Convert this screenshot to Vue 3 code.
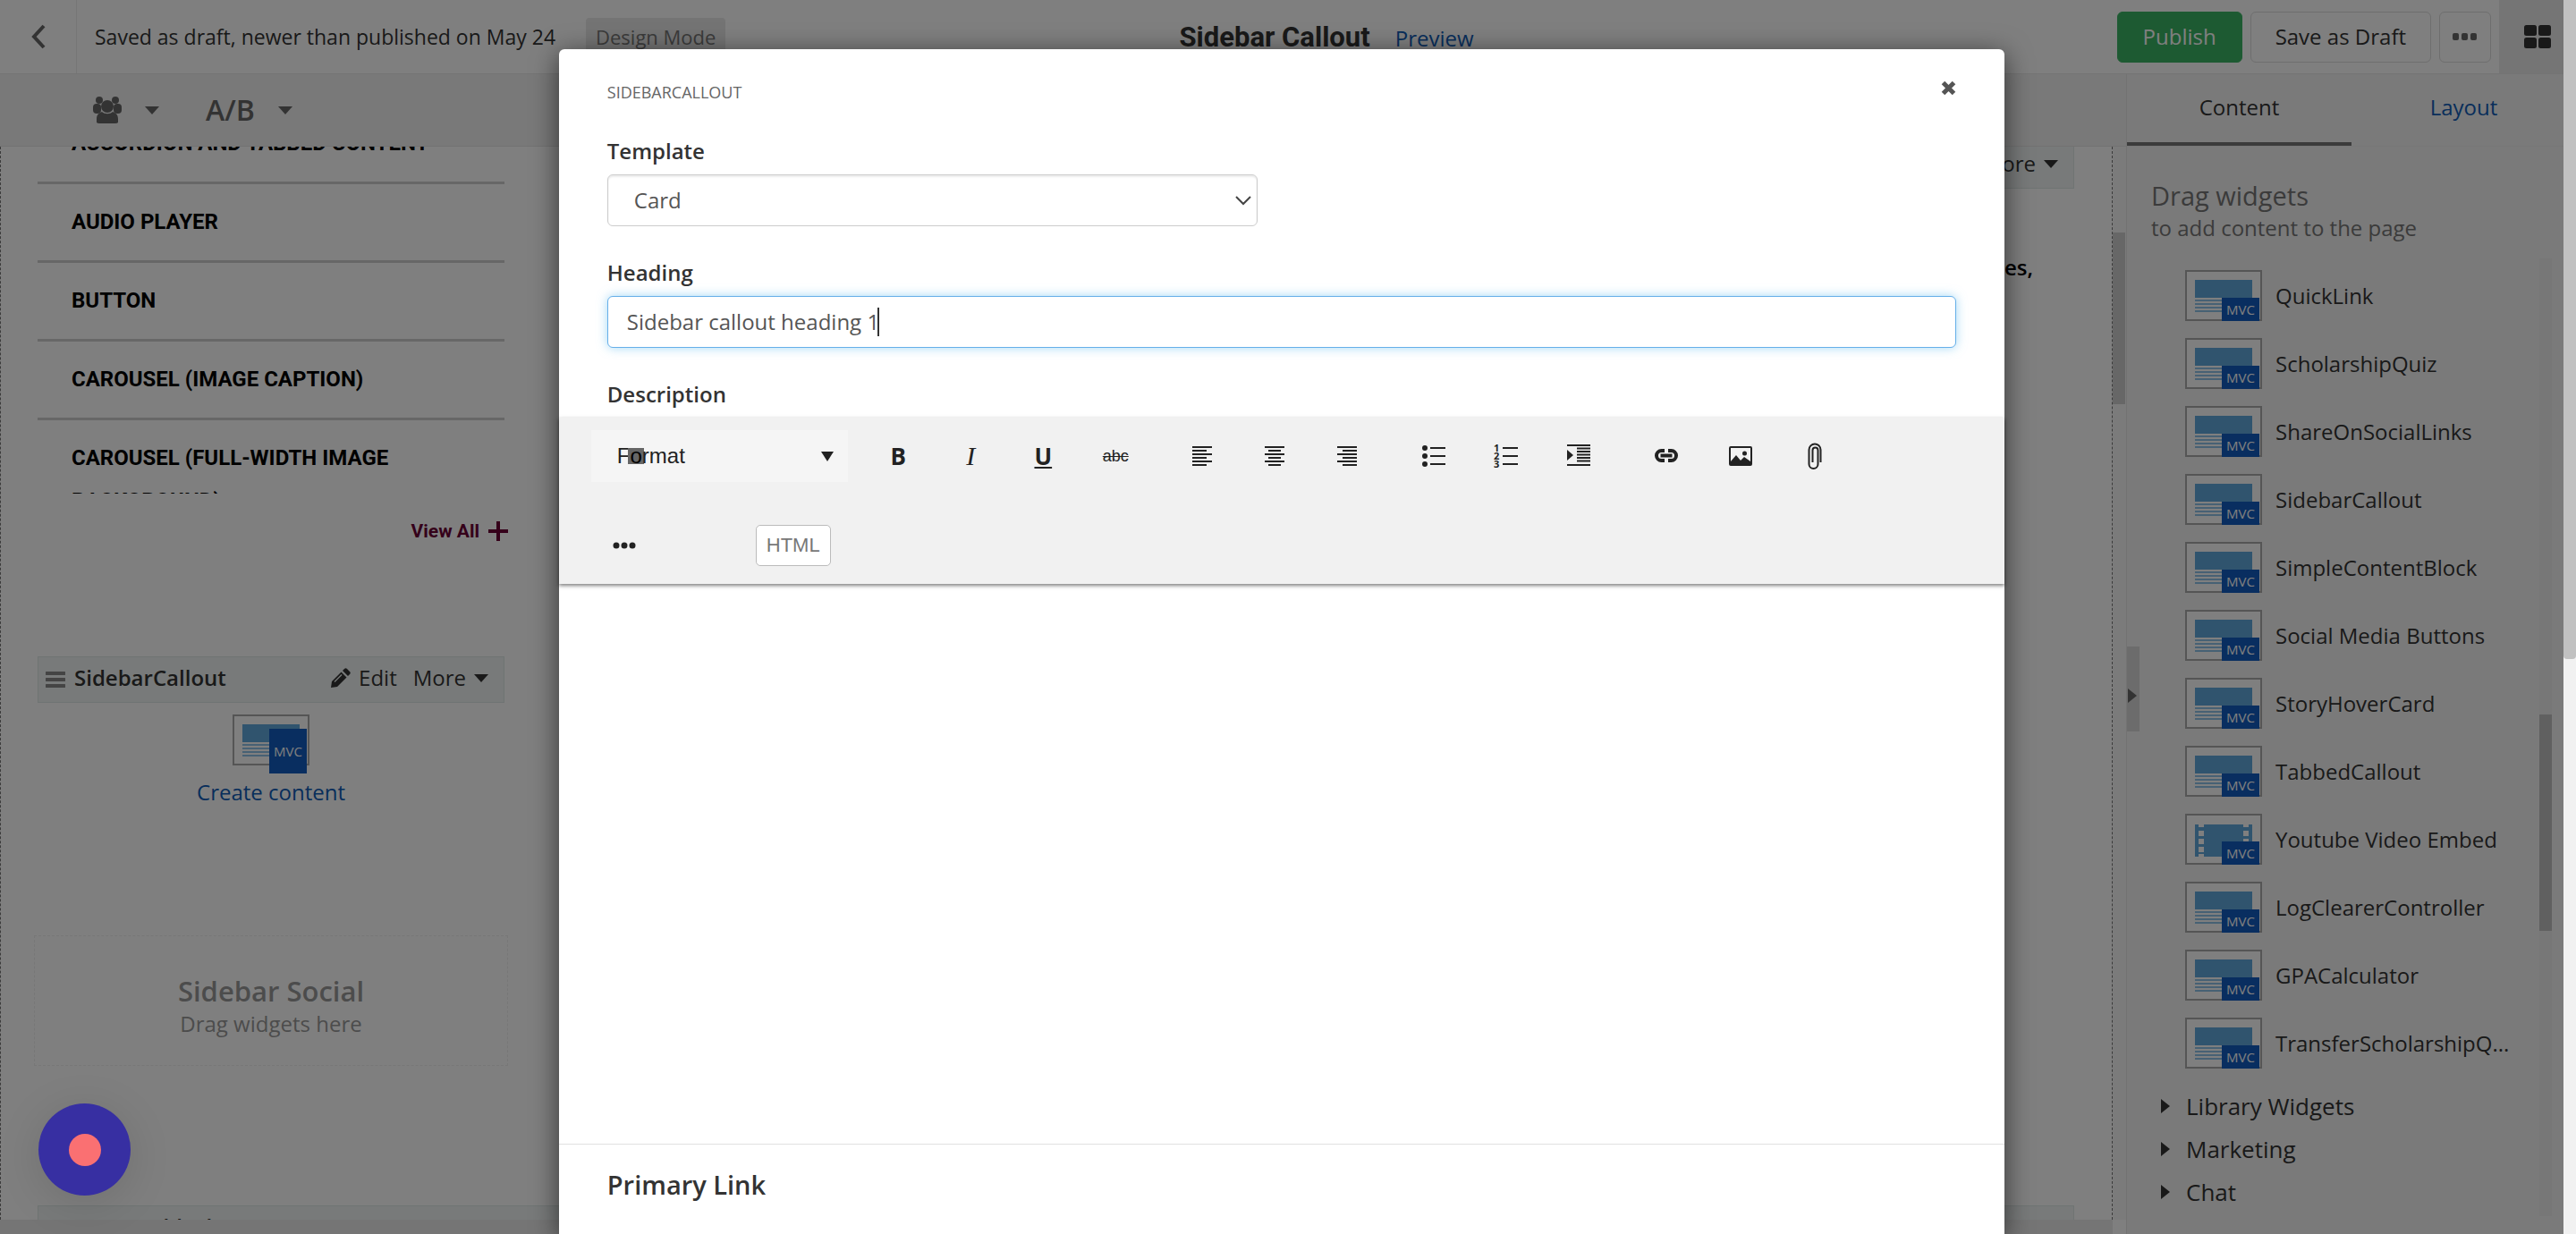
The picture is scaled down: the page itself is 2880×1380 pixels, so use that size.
<template>
  <div class="screen">
    <header class="topbar">
      <button class="back" title="Back">
        <svg width="18" height="28" viewBox="0 0 18 28">
          <path d="M15 2L4 14l11 12" fill="none" stroke="currentColor" stroke-width="4" />
        </svg>
      </button>
      <div class="topbar-side">
        <span class="status">Saved as draft, newer than published on May 24</span>
        <span class="mode">Design Mode</span>
      </div>
      <div class="topbar-title">
        <h1>Sidebar Callout</h1>
        <a href="#">Preview</a>
      </div>
      <div class="topbar-side topbar-actions">
        <button class="btn publish">Publish</button>
        <button class="btn">Save as Draft</button>
        <button class="btn dots" title="More actions">
          <svg width="28" height="8" viewBox="0 0 28 8">
            <rect v-for="x in [0, 10, 20]" :key="x" :x="x" width="7" height="8" rx="2" fill="currentColor" />
          </svg>
        </button>
        <button class="grid-btn" title="Widgets">
          <svg width="30" height="26" viewBox="0 0 30 26" fill="currentColor">
            <rect width="14" height="12" rx="2.5" />
            <rect x="16" width="14" height="12" rx="2.5" />
            <rect y="14" width="14" height="12" rx="2.5" />
            <rect x="16" y="14" width="14" height="12" rx="2.5" />
          </svg>
        </button>
      </div>
    </header>

    <div class="workspace">
      <main class="editor">
        <div class="personalize">
          <button class="tool" title="Audience">
            <svg width="32" height="30" viewBox="0 0 32 30" fill="currentColor">
              <circle cx="7" cy="4" r="4" />
              <circle cx="25" cy="4" r="4" />
              <rect x="0" y="8" width="9" height="11" rx="4" />
              <rect x="23" y="8" width="9" height="11" rx="4" />
              <circle cx="16" cy="11" r="7" />
              <path d="M4 29v-4c0-5 3-7 6-8 3 3 9 3 12 0 3 1 6 3 6 8v4q-1 1-3 1H7q-2 0-3-1z" />
            </svg>
            <i class="caret"></i>
          </button>
          <button class="tool">A/B <i class="caret"></i></button>
        </div>

        <div class="canvas">
          <div class="page">
            <div class="columns">
              <aside class="left-col">
                <ul class="links">
                  <li v-for="item in links" :key="item">{{ item }}</li>
                </ul>
                <a href="#" class="view-all">
                  View All
                  <svg width="22" height="22" viewBox="0 0 22 22">
                    <path d="M11 0v22M0 11h22" stroke="currentColor" stroke-width="4" />
                  </svg>
                </a>

                <div class="widget-bar">
                  <svg class="grip" width="22" height="18" viewBox="0 0 22 18">
                    <path d="M1 2h20M1 9h20M1 16h20" stroke="#888" stroke-width="4" stroke-linecap="round" />
                  </svg>
                  <strong>SidebarCallout</strong>
                  <button>
                    <svg width="22" height="22" viewBox="0 0 22 22" fill="currentColor">
                      <path d="M15 1q1.500-1.500 3 0l3 3q1.500 1.500 0 3l-2 2-6-6zM11.500 4.500l6 6L7 21l-7 1 1-7z" />
                      <path d="M4 15.500l8-8" stroke="#f0f5f4" stroke-width="1.200" />
                    </svg>
                    Edit
                  </button>
                  <button>More <i class="caret"></i></button>
                </div>
                <div class="empty-widget">
                  <div class="thumb large">
                    <span class="art text"></span>
                    <span class="mvc">MVC</span>
                  </div>
                  <a href="#">Create content</a>
                </div>

                <div class="dropzone">
                  <h3>Sidebar Social</h3>
                  <p>Drag widgets here</p>
                </div>
              </aside>

              <section class="main-col">
                <div class="widget-bar">
                  <button>More <i class="caret"></i></button>
                </div>
                <p>es,</p>
              </section>
            </div>

            <div class="widget-bar footer-bar">
              <svg class="grip" width="22" height="18" viewBox="0 0 22 18">
                <path d="M1 2h20M1 9h20M1 16h20" stroke="#888" stroke-width="4" stroke-linecap="round" />
              </svg>
              <strong>Content block</strong>
            </div>
          </div>
          <div class="v-scroll"><span></span></div>
        </div>
        <div class="h-scroll"></div>
      </main>

      <aside class="sidebar">
        <nav class="tabs">
          <a href="#" class="active">Content</a>
          <a href="#">Layout</a>
        </nav>
        <div class="intro">
          <h2>Drag widgets</h2>
          <p>to add content to the page</p>
        </div>
        <div class="panel">
          <div class="panel-body">
            <ul class="widgets">
              <li v-for="widget in widgets" :key="widget.name">
                <div class="thumb">
                  <svg v-if="widget.video" class="art" width="64" height="38" viewBox="0 0 64 38">
                    <path d="M0 1h4v3h6V1h44v3h6V1h4v36h-4v-3h-6v3H10v-3H4v3H0z" fill="#60a8dc" />
                    <path
                      d="M4 8h6v6H4zM4 17h6v6H4zM4 26h6v6H4zM54 8h6v6h-6zM54 17h6v6h-6zM54 26h6v6h-6z"
                      fill="#fff"
                    />
                  </svg>
                  <span v-else class="art text"></span>
                  <span class="mvc">MVC</span>
                </div>
                <span>{{ widget.name }}</span>
              </li>
            </ul>
            <button v-for="group in groups" :key="group" class="group">
              <i class="arrow"></i>{{ group }}
            </button>
          </div>
          <div class="panel-scroll"><span></span></div>
        </div>
        <button class="collapse" title="Collapse"><i class="arrow"></i></button>
      </aside>
    </div>

    <div class="overlay">
      <div class="backdrop">
        <form class="modal" @submit.prevent>
          <div class="modal-head">
            <span>SIDEBARCALLOUT</span>
            <button type="button" class="close" title="Close">
              <svg width="17" height="17" viewBox="0 0 17 17">
                <path d="M2.500 2.500l12 12M14.500 2.500l-12 12" stroke="currentColor" stroke-width="5" />
              </svg>
            </button>
          </div>

          <div class="field">
            <label for="template">Template</label>
            <div class="select-wrap">
              <select id="template" v-model="template">
                <option>Card</option>
              </select>
              <svg width="18" height="11" viewBox="0 0 18 11">
                <path d="M1 1l8 8 8-8" fill="none" stroke="#444" stroke-width="2" />
              </svg>
            </div>
          </div>

          <div class="field">
            <label for="heading">Heading</label>
            <div class="input-wrap">
              <input id="heading" v-model="heading" type="text" />
              <span class="text-cursor"></span>
            </div>
          </div>

          <div class="field description">
            <label for="description">Description</label>
          </div>

          <div class="rte-bar">
            <div class="rte-row">
              <button type="button" class="format">
                <span>F<mark>o</mark>rmat</span>
                <i class="caret"></i>
              </button>
              <div class="rte-group">
                <button type="button" title="Bold"><b>B</b></button>
                <button type="button" title="Italic"><em>I</em></button>
                <button type="button" title="Underline"><u>U</u></button>
                <button type="button" title="Strikethrough"><s>abc</s></button>
              </div>
              <div v-for="(group, i) in toolGroups" :key="i" class="rte-group">
                <button v-for="tool in group" :key="tool.title" type="button" :title="tool.title">
                  <svg width="30" height="30" viewBox="0 0 30 30">
                    <path
                      v-if="tool.line"
                      :d="tool.line"
                      :stroke-width="tool.width || 2"
                      fill="none"
                      stroke="currentColor"
                    />
                    <path v-if="tool.fill" :d="tool.fill" fill="currentColor" fill-rule="evenodd" />
                    <template v-if="tool.numbers">
                      <text v-for="n in 3" :key="n" x="1" :y="n * 9 + 1" class="list-no">{{ n }}</text>
                    </template>
                  </svg>
                </button>
              </div>
            </div>
            <div class="rte-row second">
              <button type="button" class="rte-more" title="More tools">
                <svg width="26" height="8" viewBox="0 0 26 8" fill="currentColor">
                  <circle cx="4" cy="4" r="3.500" />
                  <circle cx="13" cy="4" r="3.500" />
                  <circle cx="22" cy="4" r="3.500" />
                </svg>
              </button>
              <button type="button" class="html">HTML</button>
            </div>
          </div>
          <textarea id="description"></textarea>

          <h2 class="section-title">Primary Link</h2>
        </form>
      </div>
      <div class="page-scroll"><span></span></div>
    </div>

    <button class="record" title="Record"></button>
  </div>
</template>

<script setup>
import { ref } from 'vue'

const template = ref('Card')
const heading = ref('Sidebar callout heading 1')

const links = [
  'ACCORDION AND TABBED CONTENT',
  'AUDIO PLAYER',
  'BUTTON',
  'CAROUSEL (IMAGE CAPTION)',
  'CAROUSEL (FULL-WIDTH IMAGE BACKGROUND)'
]

const widgets = [
  { name: 'QuickLink' },
  { name: 'ScholarshipQuiz' },
  { name: 'ShareOnSocialLinks' },
  { name: 'SidebarCallout' },
  { name: 'SimpleContentBlock' },
  { name: 'Social Media Buttons' },
  { name: 'StoryHoverCard' },
  { name: 'TabbedCallout' },
  { name: 'Youtube Video Embed', video: true },
  { name: 'LogClearerController' },
  { name: 'GPACalculator' },
  { name: 'TransferScholarshipQ...' }
]

const groups = ['Library Widgets', 'Marketing', 'Chat']

const toolGroups = [
  [
    { title: 'Align left', line: 'M4 5h22M4 9h16M4 13h22M4 17h16M4 21h22M4 25h16' },
    { title: 'Align center', line: 'M4 5h22M8 9h14M4 13h22M8 17h14M4 21h22M8 25h14' },
    { title: 'Align right', line: 'M4 5h22M10 9h16M4 13h22M10 17h16M4 21h22M10 25h16' }
  ],
  [
    {
      title: 'Bulleted list',
      line: 'M11 6h17M11 15h17M11 24h17',
      fill: 'M2 6a3 3 0 1 1 6 0a3 3 0 1 1-6 0M2 15a3 3 0 1 1 6 0a3 3 0 1 1-6 0M2 24a3 3 0 1 1 6 0a3 3 0 1 1-6 0'
    },
    { title: 'Numbered list', line: 'M11 6h17M11 15h17M11 24h17', numbers: true },
    {
      title: 'Indent',
      line: 'M2 3h26M13 6.500h15M13 10h15M13 13.500h15M13 17h15M13 20.500h15M2 25h26',
      fill: 'M2 8l7 6-7 6z'
    }
  ],
  [
    {
      title: 'Link',
      width: 4,
      line: 'M13 9H9.500a5.500 5.500 0 0 0 0 11H13M17 9h3.500a5.500 5.500 0 0 1 0 11H17M8.500 14.500h13'
    },
    {
      title: 'Image',
      fill: 'M4 4h22q2 0 2 2v18q0 2-2 2H4q-2 0-2-2V6q0-2 2-2zM4 6v15l6-7 5 6 4-4 7 5V6zM17 12a2.500 2.500 0 1 1 5 0a2.500 2.500 0 1 1-5 0'
    },
    {
      title: 'Attach',
      line: 'M21.500 22V8a6.500 6.500 0 0 0-13 0v16a4.500 4.500 0 0 0 10 0V8.500a3 3 0 0 0-6 0V22'
    }
  ]
]
</script>

<style>
body {
  margin: 0;
  overflow: hidden;
}
</style>

<style scoped>
.screen {
  position: relative;
  display: flex;
  flex-direction: column;
  height: 100vh;
  overflow: hidden;
  background: #fff;
  color: #333;
  font-family: 'Open Sans', 'Noto Sans', sans-serif;
  font-size: 24px;
  line-height: 32px;
}

.screen *,
.screen *::before {
  box-sizing: border-box;
}

h1, h2, h3, p, ul {
  margin: 0;
  padding: 0;
}

ul {
  list-style: none;
}

a {
  color: #105cb6;
  text-decoration: none;
}

button {
  display: flex;
  align-items: center;
  justify-content: center;
  padding: 0;
  border: none;
  background: none;
  color: inherit;
  font: inherit;
  cursor: pointer;
}

.caret {
  border: 8px solid transparent;
  border-top: 9px solid currentColor;
  border-bottom: 0;
}

.arrow {
  border: 8px solid transparent;
  border-left: 10px solid currentColor;
  border-right: 0;
}

/* Top bar */
.topbar {
  display: flex;
  flex-shrink: 0;
  height: 83px;
  border-bottom: 1px solid #e8e8e8;
}

.back {
  width: 86px;
  border-right: 1px solid #ececec;
  color: #666;
}

.topbar-side {
  display: flex;
  flex: 1;
  align-items: center;
  min-width: 0;
}

.status {
  padding-left: 20px;
  font-size: 23px;
  white-space: nowrap;
}

.mode {
  margin-left: 34px;
  padding: 5px 11px;
  border-radius: 4px;
  background: #e8e8e8;
  color: #777;
  font-size: 22px;
  white-space: nowrap;
}

.topbar-title {
  display: flex;
  align-items: baseline;
  gap: 28px;
  padding-top: 18px;
}

.topbar-title h1 {
  font: 700 31px/48px Roboto, 'Open Sans', sans-serif;
}

.topbar-actions {
  justify-content: flex-end;
  gap: 9px;
}

.btn {
  min-width: 58px;
  height: 57px;
  padding: 0 27px;
  border: 1px solid #dcdcdc;
  border-radius: 6px;
}

.btn.publish {
  min-width: 140px;
  border-color: #3ab564;
  background: #3ab564;
  color: #fff;
}

.btn.dots {
  padding: 0;
  color: #666;
}

.grid-btn {
  width: 86px;
  height: 82px;
  background: #eaeaea;
}

/* Workspace */
.workspace {
  display: flex;
  flex: 1;
  min-height: 0;
}

.editor {
  display: flex;
  flex: 1;
  flex-direction: column;
  min-width: 0;
}

.personalize {
  display: flex;
  flex-shrink: 0;
  align-items: center;
  gap: 52px;
  height: 81px;
  padding-left: 104px;
  border-bottom: 1px solid #e4e4e4;
  background: #f2f2f2;
  color: #666;
}

.tool {
  gap: 26px;
  font-size: 32px;
  font-weight: 600;
}

.canvas {
  display: flex;
  flex: 1;
  min-height: 0;
}

.page {
  display: flex;
  flex: 1;
  flex-direction: column;
  min-width: 0;
  overflow: hidden;
  border: 1px dashed #777;
  border-width: 0 1px;
}

.columns {
  display: flex;
  justify-content: space-between;
  height: 1184px;
  flex-shrink: 0;
}

.left-col {
  display: flex;
  flex-direction: column;
  width: 530px;
  margin-left: 37px;
}

.links {
  height: 388px;
  margin: 0 4px;
  overflow: hidden;
  color: #000;
  font: 700 24px/48px Roboto, 'Open Sans', sans-serif;
}

.links li {
  padding: 18px 38px 19px;
  border-bottom: 3px solid #cfcfcf;
}

.links li:first-child {
  margin-top: -46px;
}

.view-all {
  display: flex;
  align-items: center;
  align-self: flex-end;
  gap: 10px;
  margin-top: 26px;
  color: #6a0035;
  font: 700 21px/32px Roboto, 'Open Sans', sans-serif;
}

.widget-bar {
  display: flex;
  align-items: center;
  gap: 18px;
  height: 52px;
  margin: 0 4px;
  padding: 0 17px 4px 8px;
  border: 1px solid #dfe8e6;
  background: #f0f5f4;
}

.widget-bar strong {
  margin-right: auto;
  font-weight: 600;
}

.widget-bar .grip {
  margin: 4px -8px 0 0;
}

.widget-bar button {
  gap: 9px;
}

.left-col .widget-bar {
  margin-top: 124px;
}

.empty-widget {
  display: flex;
  flex-direction: column;
  align-items: center;
  gap: 14px;
  margin-top: 13px;
}

.dropzone {
  display: flex;
  flex-direction: column;
  align-items: center;
  height: 146px;
  margin-top: 144px;
  padding-top: 40px;
  border: 1px dashed #eee;
  color: #999;
}

.dropzone h3 {
  font-size: 31px;
  font-weight: 600;
  line-height: 42px;
}

.main-col {
  width: 1700px;
  margin-right: 38px;
}

.main-col .widget-bar {
  justify-content: flex-end;
  margin-top: -5px;
}

.main-col p {
  padding: 72px 50px 0 0;
  color: #000;
  font-weight: 600;
  text-align: right;
}

.footer-bar {
  flex-shrink: 0;
  margin: 0 42px 0 41px;
}

.v-scroll {
  width: 15px;
  padding: 96px 1px 0 0;
  background: #f7f7f7;
}

.v-scroll span {
  display: block;
  height: 192px;
  background: #cfcfcf;
}

.h-scroll {
  height: 16px;
  margin-right: 15px;
  background: #eaeaea;
}

/* Widget sidebar */
.sidebar {
  position: relative;
  display: flex;
  flex-direction: column;
  flex-shrink: 0;
  width: 503px;
  border-left: 1px solid #e4e4e4;
  background: #f5f5f5;
}

.tabs {
  display: flex;
  flex-shrink: 0;
  height: 81px;
  border-bottom: 1px solid #eee;
}

.tabs a {
  flex: 1;
  padding-top: 21px;
  border-bottom: 4px solid transparent;
  text-align: center;
}

.tabs .active {
  border-color: #777;
  color: #333;
}

.intro {
  padding: 34px 27px 0;
  color: #777;
}

.intro h2 {
  font-size: 29px;
  font-weight: 400;
  line-height: 41px;
}

.panel {
  display: flex;
  flex: 1;
  min-height: 0;
  margin: 18px 27px 20px;
}

.panel-body {
  flex: 1;
  min-width: 0;
}

.widgets {
  display: flex;
  flex-direction: column;
  gap: 19px;
  padding: 13px 0 18px 38px;
}

.widgets li {
  display: flex;
  align-items: center;
  gap: 15px;
  white-space: nowrap;
}

.thumb {
  position: relative;
  width: 86px;
  height: 57px;
  padding: 9px;
  border: 2px solid #aaa;
  background: #fff;
}

.art {
  display: block;
}

.art.text {
  width: 64px;
  height: 37px;
  border-top: 20px solid #60a8dc;
  background: repeating-linear-gradient(#fff 0 2px, #8fc3e8 2px 4px);
}

.mvc {
  position: absolute;
  right: 1px;
  bottom: -2px;
  width: 42px;
  height: 26px;
  background: #125cc0;
  color: #fff;
  font-size: 15px;
  line-height: 27px;
  text-align: center;
}

.large .mvc {
  bottom: -11px;
  height: 50px;
  line-height: 50px;
}

.group {
  justify-content: flex-start;
  gap: 18px;
  width: 100%;
  height: 48px;
  padding-left: 11px;
  font-size: 26px;
}

.panel-scroll {
  width: 14px;
  padding-top: 510px;
  background: #eee;
}

.panel-scroll span {
  display: block;
  height: 242px;
  background: #c1c1c1;
}

.collapse {
  position: absolute;
  top: 640px;
  left: 0;
  justify-content: flex-start;
  width: 14px;
  height: 95px;
  padding: 14px 0 0 1px;
  background: #d8d8d8;
  color: #666;
}

/* Dialog */
.overlay {
  position: absolute;
  inset: 0;
  display: flex;
}

.backdrop {
  display: flex;
  flex: 1;
  justify-content: center;
  overflow: hidden;
  padding-top: 55px;
  background: rgba(0, 0, 0, 0.5);
}

.modal {
  display: flex;
  flex-direction: column;
  width: 56.4%;
  border-radius: 6px 6px 0 0;
  background: #fff;
  box-shadow: 0 6px 30px rgba(0, 0, 0, 0.6);
}

.modal-head {
  display: flex;
  justify-content: space-between;
  padding: 32px 54px 0;
  color: #666;
  font-size: 18px;
}

.close {
  align-self: flex-start;
  height: 22px;
  color: #555;
}

.field {
  display: flex;
  flex-direction: column;
  gap: 10px;
  padding: 0 54px;
}

.modal-head + .field {
  margin-top: 34px;
}

.field + .field {
  margin-top: 36px;
}

.field label {
  font-weight: 600;
}

.description {
  padding-bottom: 10px;
}

.select-wrap,
.input-wrap {
  position: relative;
}

.select-wrap {
  width: 727px;
}

.select-wrap svg {
  position: absolute;
  top: 24px;
  right: 7px;
}

select,
input {
  display: block;
  width: 100%;
  height: 58px;
  padding: 0 21px 2px;
  border: 1px solid #ccc;
  border-radius: 6px;
  outline: none;
  background: #fff;
  box-shadow: inset 0 2px 2px rgba(0, 0, 0, 0.08);
  color: #555;
  font: inherit;
}

select {
  padding: 0 29px;
  appearance: none;
}

input {
  border-color: #66afe9;
  box-shadow: 0 0 12px rgba(102, 190, 240, 0.6);
}

.text-cursor {
  position: absolute;
  top: 13px;
  left: 302px;
  width: 2px;
  height: 32px;
  background: #333;
}

.rte-bar {
  position: relative;
  display: flex;
  flex-direction: column;
  gap: 48px;
  padding: 14px 36px 20px;
  background: #f1f1f1;
  box-shadow: 0 2px 4px rgba(0, 0, 0, 0.5);
  color: #222;
}

.rte-row {
  display: flex;
  gap: 16px;
}

.format {
  justify-content: space-between;
  width: 287px;
  height: 58px;
  padding: 0 16px 0 29px;
  background: #f5f5f5;
  font-family: 'Liberation Sans', sans-serif;
}

.format .caret {
  border-width: 11px 7px 0;
}

.format mark {
  display: inline-block;
  margin: 0 -2px;
  padding: 0 2px;
  background: #666;
  color: #000;
  line-height: 18px;
}

.rte-group {
  display: flex;
}

.rte-group button {
  width: 81px;
  font-size: 26px;
}

.rte-group:last-child button {
  width: 83px;
}

.rte-group em {
  font-family: 'Liberation Serif', serif;
  font-size: 30px;
}

.rte-group b,
.rte-group u {
  font-weight: 700;
}

.rte-group s {
  font: 18px/24px 'Liberation Sans', sans-serif;
}

.list-no {
  fill: currentColor;
  font: 700 11px 'Open Sans', sans-serif;
}

.second {
  gap: 134px;
  padding-left: 24px;
}

.html {
  height: 46px;
  padding: 0 11px;
  border: 1px solid #bbb;
  border-radius: 5px;
  background: #fff;
  color: #777;
  font: 22px/32px 'Liberation Sans', sans-serif;
}

textarea {
  flex: 0 0 626px;
  padding: 30px 54px;
  border: none;
  outline: none;
  resize: none;
  font: inherit;
}

.section-title {
  padding: 26px 54px;
  border-top: 1px solid #e0e0e0;
  font-size: 29px;
  font-weight: 600;
  line-height: 38px;
}

.page-scroll {
  width: 14px;
  background: #f1f1f1;
}

.page-scroll span {
  display: block;
  height: 737px;
  border-radius: 0 0 4px 4px;
  background: #c1c1c1;
}

.record {
  position: absolute;
  bottom: 43px;
  left: 43px;
  width: 103px;
  height: 103px;
  border-radius: 50%;
  background: #372fa2;
  box-shadow: 0 8px 50px rgba(0, 0, 0, 0.12);
}

.record::before {
  width: 36px;
  height: 36px;
  border-radius: 50%;
  background: #fa7072;
  content: '';
}
</style>
